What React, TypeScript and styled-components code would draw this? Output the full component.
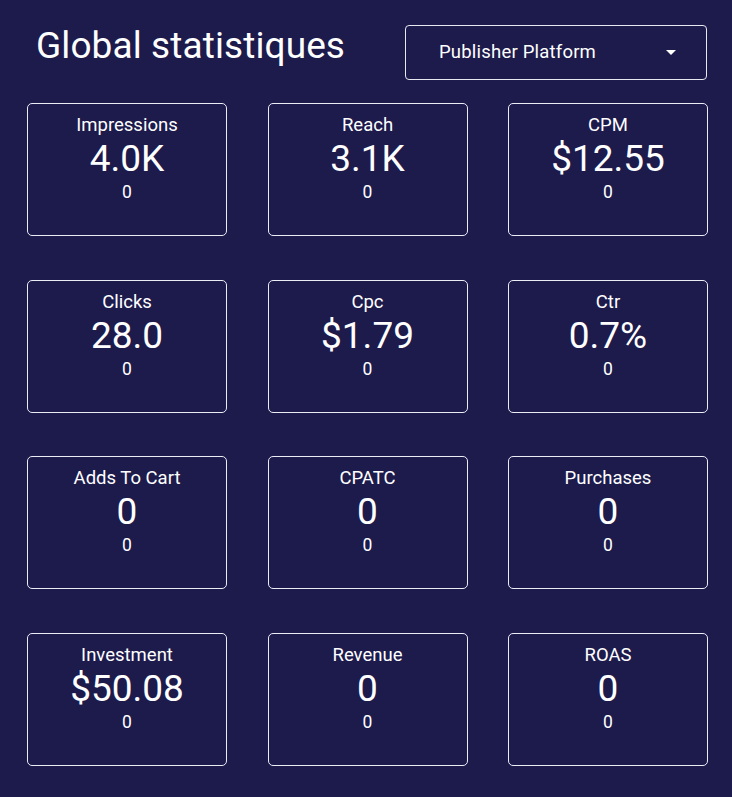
import React from "react";
import styled, { createGlobalStyle } from "styled-components";

const GlobalStyle = createGlobalStyle`
  html, body {
    margin: 0;
    padding: 0;
    background: #1d1a4c;
  }
  body {
    font-family: Roboto, "Noto Sans", Arial, sans-serif;
    color: #fff;
  }
`;

interface IStat {
  label: string;
  value: string;
  delta: string;
}

const stats: IStat[] = [
  { label: "Impressions", value: "4.0K", delta: "0" },
  { label: "Reach", value: "3.1K", delta: "0" },
  { label: "CPM", value: "$12.55", delta: "0" },
  { label: "Clicks", value: "28.0", delta: "0" },
  { label: "Cpc", value: "$1.79", delta: "0" },
  { label: "Ctr", value: "0.7%", delta: "0" },
  { label: "Adds To Cart", value: "0", delta: "0" },
  { label: "CPATC", value: "0", delta: "0" },
  { label: "Purchases", value: "0", delta: "0" },
  { label: "Investment", value: "$50.08", delta: "0" },
  { label: "Revenue", value: "0", delta: "0" },
  { label: "ROAS", value: "0", delta: "0" },
];

const StyledPage = styled.div`
  width: 732px;
  min-height: 797px;
  box-sizing: border-box;
  padding: 24px 25px 0 27px;
  background: #1d1a4c;
`;

const StyledHeader = styled.div`
  display: flex;
  align-items: center;
  justify-content: space-between;
  height: 56px;
  margin-bottom: 23px;
`;

const StyledTitle = styled.h1`
  margin: 0 0 13px 9px;
  font-size: 37px;
  font-weight: 400;
  letter-spacing: 0.1px;
  color: #fff;
`;

const StyledSelect = styled.div`
  width: 302px;
  height: 55px;
  box-sizing: border-box;
  border: 1px solid #e8e8f0;
  border-radius: 4px;
  display: flex;
  align-items: center;
  justify-content: space-between;
  padding: 0 30px 0 33px;
  font-size: 18.5px;
  letter-spacing: 0.2px;
  color: #fff;
`;

const StyledCaret = styled.span`
  width: 0;
  height: 0;
  border-left: 5px solid transparent;
  border-right: 5px solid transparent;
  border-top: 5px solid #fff;
  margin-top: 1px;
`;

const StyledGrid = styled.div`
  display: grid;
  grid-template-columns: repeat(3, 200px);
  column-gap: 40.5px;
  row-gap: 43.5px;
`;

const StyledCard = styled.div`
  height: 133px;
  box-sizing: border-box;
  border: 1.5px solid #ececf4;
  border-radius: 5px;
  display: flex;
  flex-direction: column;
  align-items: center;
  padding-top: 10px;
`;

const StyledLabel = styled.div`
  font-size: 18.5px;
  line-height: 22px;
`;

const StyledValue = styled.div`
  font-size: 37px;
  line-height: 46px;
`;

const StyledDelta = styled.div`
  font-size: 17.5px;
  line-height: 20px;
`;

export default function App() {
  return (
    <>
      <GlobalStyle />
      <StyledPage>
        <StyledHeader>
          <StyledTitle>Global statistiques</StyledTitle>
          <StyledSelect>
            <span>Publisher Platform</span>
            <StyledCaret />
          </StyledSelect>
        </StyledHeader>
        <StyledGrid>
          {stats.map((stat, index) => {
            return (
              <StyledCard key={index}>
                <StyledLabel>{stat.label}</StyledLabel>
                <StyledValue>{stat.value}</StyledValue>
                <StyledDelta>{stat.delta}</StyledDelta>
              </StyledCard>
            );
          })}
        </StyledGrid>
      </StyledPage>
    </>
  );
}
